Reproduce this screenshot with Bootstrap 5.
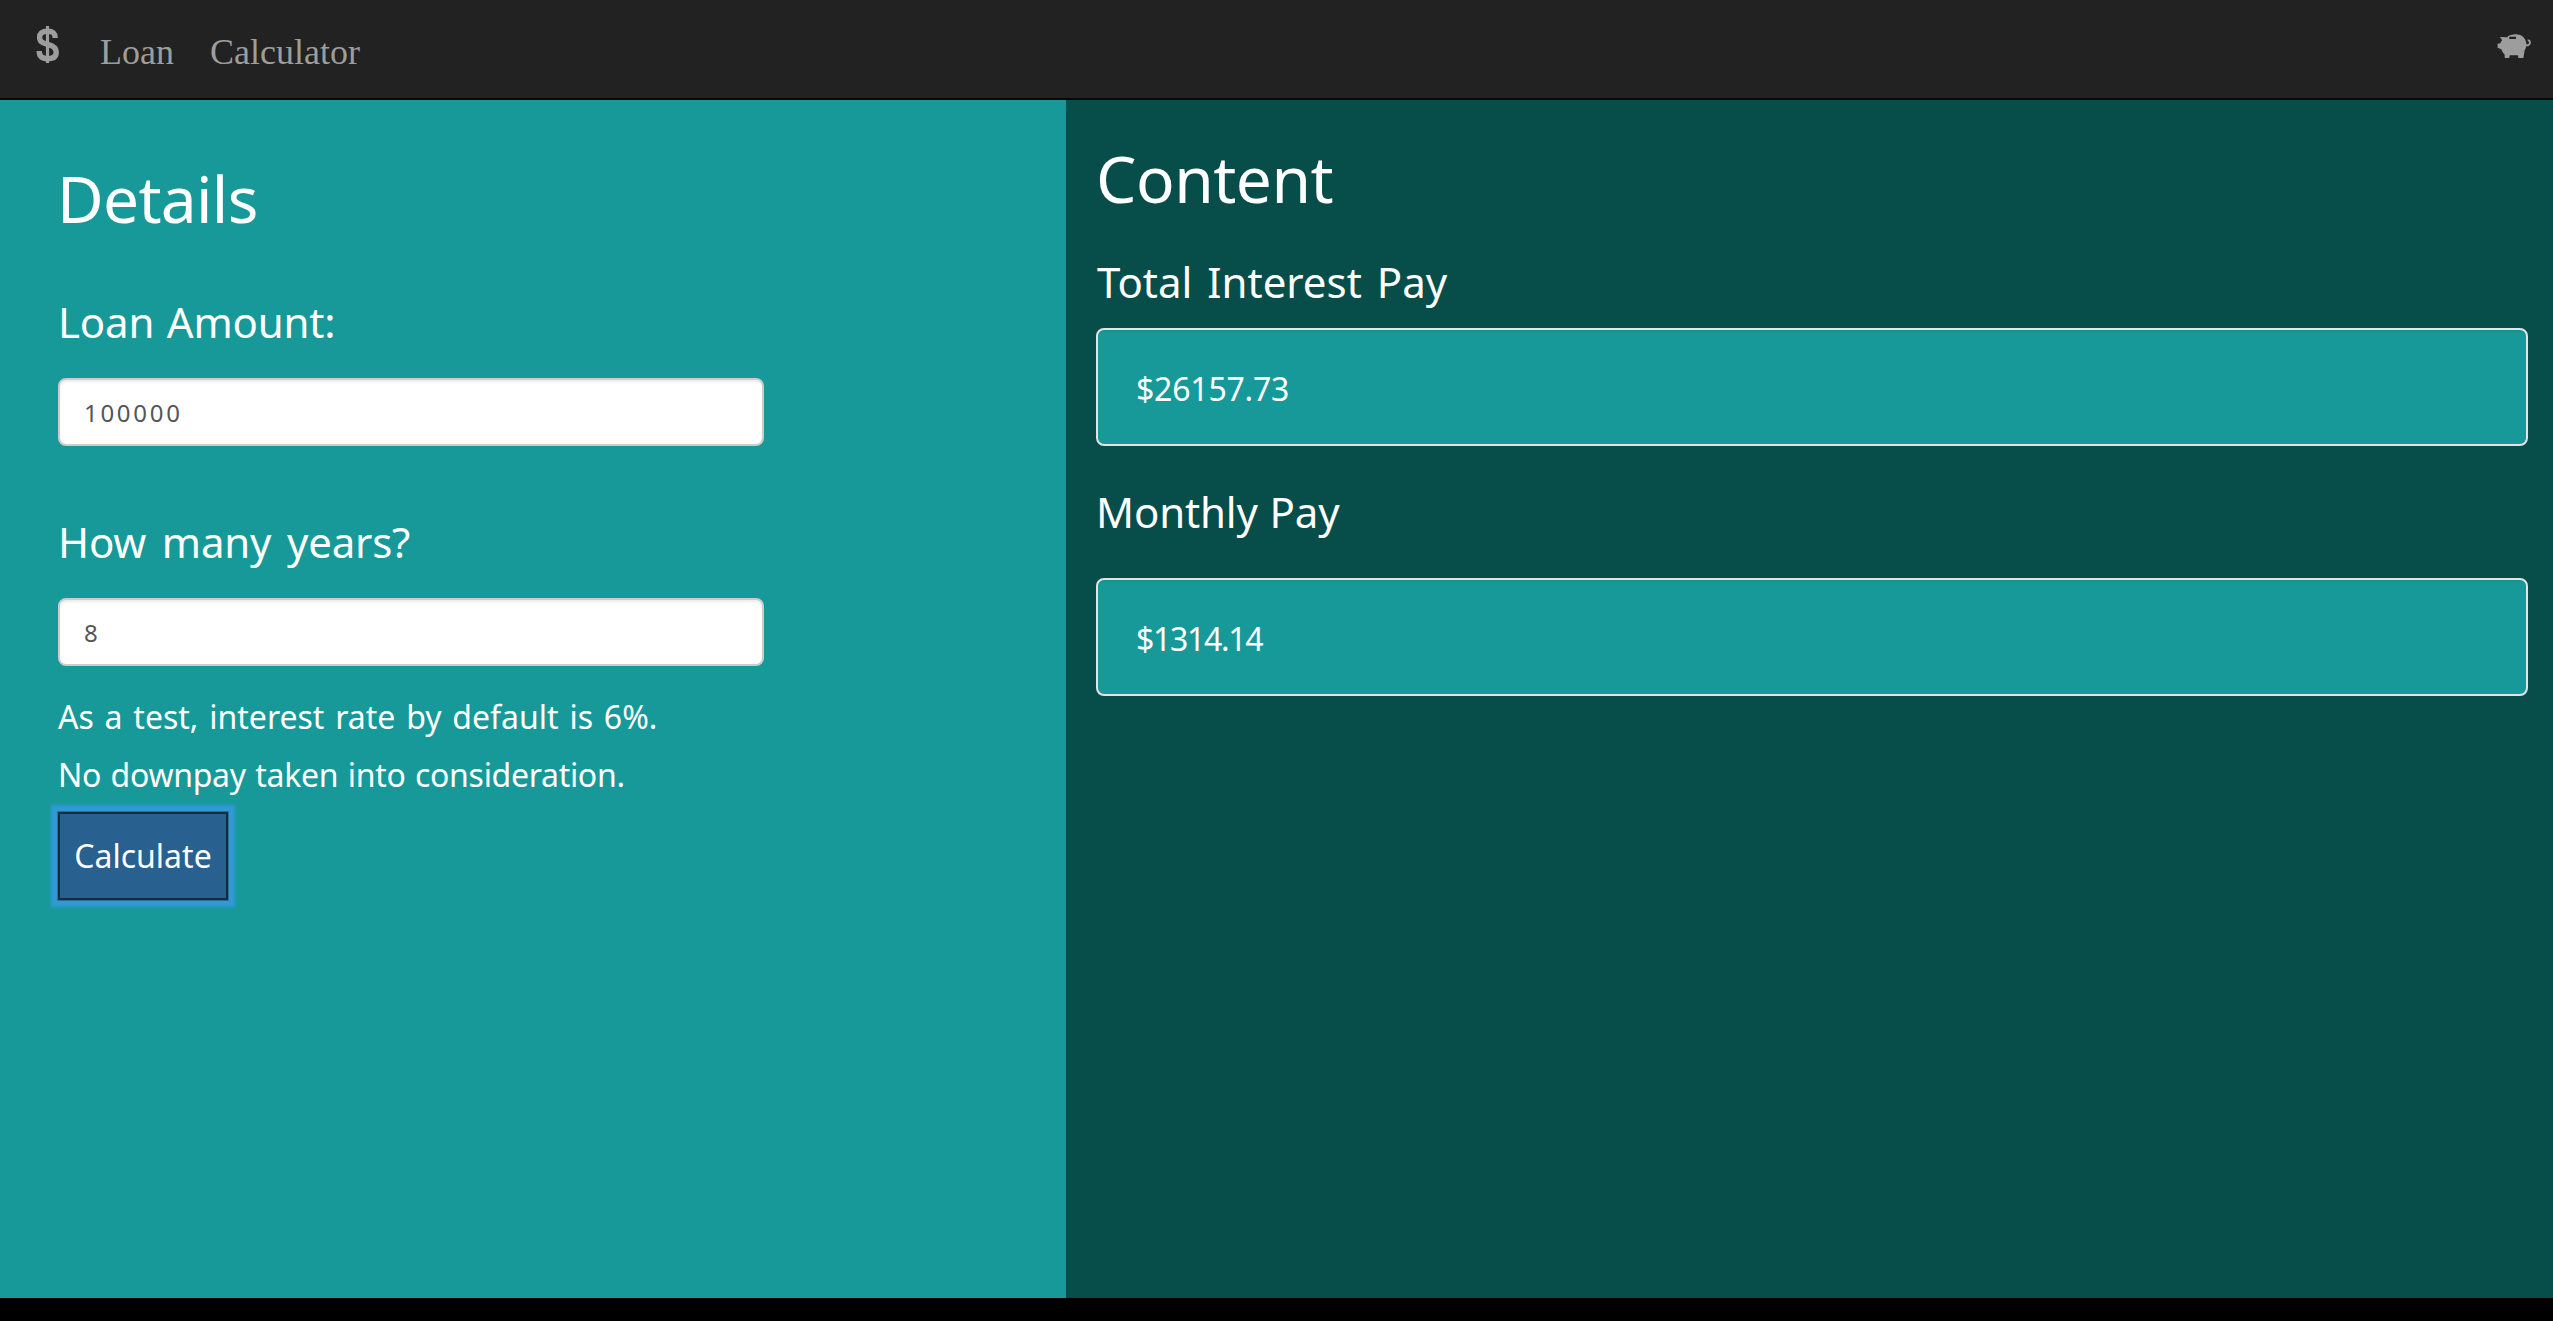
<!DOCTYPE html>
<html lang="en">
<head>
<meta charset="utf-8">
<meta name="viewport" content="width=device-width, initial-scale=1">
<title>Loan Calculator</title>
<link href="https://cdn.jsdelivr.net/npm/bootstrap@5.3.0/dist/css/bootstrap.min.css" rel="stylesheet">
<style>
  body { background: #000; color: #fff; font-family: "Noto Sans", "Open Sans", sans-serif; }
  .topbar { height: 100px; padding: 0 22px 0 36px; background: #222; border-bottom: 2px solid #080808; color: #9d9d9d; flex-wrap: nowrap; }
  .topbar a { color: inherit; font: 36px/54px "Liberation Serif", serif; text-decoration: none; }
  .brand-links { gap: 36px; padding: 6px 0 0 40px; }
  .pig { margin-bottom: 6px; }
  .usd { margin-bottom: 9px; }
  .panels { height: 1198px; }
  .details { width: 1066px; background: #189999; padding: 64px 0 0 58px; }
  .results { background: #074d4a; padding: 44px 25px 0 30px; }
  .big-title { font-size: 64px; line-height: 70px; font-weight: 400; margin: 0; }
  .field-title { display: block; font-size: 42px; line-height: 46px; margin: 0; font-weight: 400; white-space: nowrap; }
  .entry.form-control { width: 706px; height: 68px; padding: 1px 0 0 24px; border: 2px solid #ccc; border-radius: 8px; font-size: 24px; color: #555; background: #fff; box-shadow: inset 0 2px 2px rgba(0,0,0,.075); letter-spacing: 2.7px; }
  .note { font-size: 32px; line-height: 58px; margin: 0; white-space: nowrap; }
  .calc.btn { width: 170px; height: 88px; margin-top: 8px; padding: 0; border: 2px solid #122b40; border-radius: 0; background: #286090; color: #fff; font-size: 32px; box-shadow: 0 0 0 1px rgba(24,100,125,.7), 0 0 3px 7px #309ad6; }
  .amount { height: 118px; padding: 3px 0 0 38px; border: 2px solid #e3e3e3; border-radius: 8px; background: #189999; box-shadow: inset 0 2px 2px rgba(0,0,0,.05); font-size: 32px; letter-spacing: -.2px; }
  .t-details { margin-left: -1px; letter-spacing: -.7px; }
  .t-content { letter-spacing: -.5px; }
  .t-loan { margin: 65px 0 33px; word-spacing: 2px; letter-spacing: -.2px; }
  .t-years { margin: 73px 0 33px; word-spacing: 5px; letter-spacing: -.2px; }
  .t-interest { margin: 45px 0 23px 1px; word-spacing: 4px; }
  .t-monthly { margin: 43px 0 43px; word-spacing: 1px; letter-spacing: -.15px; }
  .rate-note { margin-top: 22px; word-spacing: 2.5px; }
  .downpay-note { letter-spacing: -.3px; word-spacing: 1.5px; }
  .monthly-value { letter-spacing: -1.3px; }
</style>
</head>
<body>
<nav class="topbar navbar d-flex align-items-center">
  <svg class="usd flex-shrink-0" width="24" height="38" viewBox="0 0 24 38" fill="none" stroke="currentColor" aria-hidden="true">
    <path d="M11.5 0V37" stroke-width="3.2"/>
    <path d="M19.2 12C19.2 7.3 17 5.2 11.5 5.2S3.6 7.7 3.6 11.3C3.6 15.6 6 17 11.6 18.3S20.2 21.5 20.2 26.2C20.2 30.5 17.3 32.7 11.7 32.7S3.2 30.5 3.2 25" stroke-width="5.4"/>
  </svg>
  <div class="brand-links d-flex"><a href="#">Loan</a><a href="#">Calculator</a></div>
  <svg class="pig ms-auto flex-shrink-0" width="34" height="25" viewBox="7 8 34 25" aria-hidden="true">
    <path fill="#9d9d9d" fill-rule="evenodd" d="M10 11 L17 11.2 C19 9 22 8.2 26 8.2 C32 8.2 35.8 12 36.4 18 C36.3 21 35.8 22.5 34.6 24.5 L33.4 32 H28.4 L28 29.2 H19.8 L19.2 32 H14.8 L14.5 28.2 C13 27 12 25.3 11.3 23.3 L7.6 21.8 V17.7 L10.3 17.2 C11 15.8 11.6 14.8 12.1 14.3 Z M19.3 10.7 V13.1 H26 V10.7 Z"/>
    <path fill="none" stroke="#9d9d9d" stroke-width="1.8" d="M35 19.2C38 19.6 40 18.7 40 16.5C40 14.8 38.9 14 37.8 14.6"/>
  </svg>
</nav>
<main class="panels d-flex">
  <section class="details flex-shrink-0">
    <h1 class="big-title t-details">Details</h1>
    <form>
      <label class="field-title t-loan" for="loan">Loan Amount:</label>
      <input class="entry form-control" id="loan" type="text" value="100000">
      <label class="field-title t-years" for="years">How many years?</label>
      <input class="entry form-control" id="years" type="text" value="8">
      <p class="note rate-note">As a test, interest rate by default is 6%.</p>
      <p class="note downpay-note">No downpay taken into consideration.</p>
      <button class="calc btn btn-primary" type="button">Calculate</button>
    </form>
  </section>
  <section class="results flex-grow-1">
    <h1 class="big-title t-content">Content</h1>
    <h2 class="field-title t-interest">Total Interest Pay</h2>
    <div class="amount d-flex align-items-center">$26157.73</div>
    <h2 class="field-title t-monthly">Monthly Pay</h2>
    <div class="amount monthly-value d-flex align-items-center">$1314.14</div>
  </section>
</main>
<script src="https://cdn.jsdelivr.net/npm/bootstrap@5.3.0/dist/js/bootstrap.bundle.min.js"></script>
</body>
</html>
